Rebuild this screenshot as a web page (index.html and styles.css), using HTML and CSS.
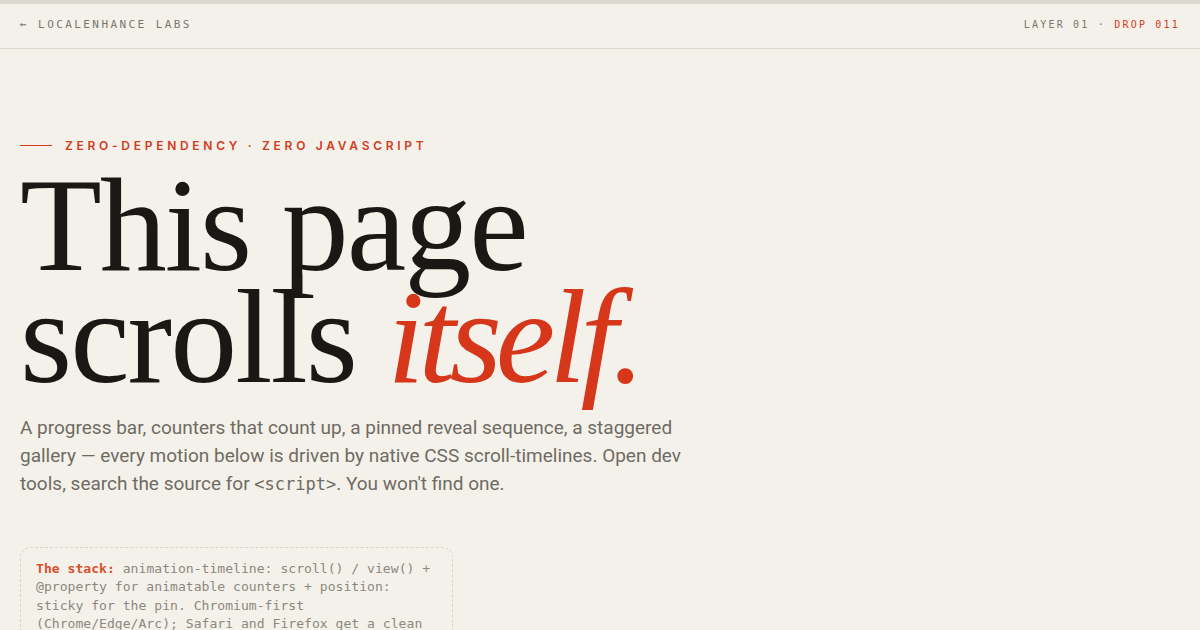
FILE: index.html
```html
<!DOCTYPE html>
<html lang="en">
<head>
<meta charset="utf-8">
<title>This page scrolls itself.</title>
<link rel="stylesheet" href="styles.css">
</head>
<body>
<div class="progress"></div>
<header class="topbar">
  <a class="back" href="#">← LocalEnhance Labs</a>
  <div class="meta">Layer 01 · <span class="drop">Drop 011</span></div>
</header>
<main class="hero">
  <div class="eyebrow"><span class="rule"></span><span>Zero-dependency · Zero JavaScript</span></div>
  <h1 class="title">This page<br>scrolls <em>itself.</em></h1>
  <p class="lede">A progress bar, counters that count up, a pinned reveal sequence, a staggered gallery — every motion below is driven by native CSS scroll-timelines. Open dev tools, search the source for <code>&lt;script&gt;</code>. You won't find one.</p>
  <div class="stack"><strong>The stack:</strong> animation-timeline: scroll() / view() + @property for animatable counters + position: sticky for the pin. Chromium-first (Chrome/Edge/Arc); Safari and Firefox get a clean static fallback.</div>
</main>
</body>
</html>
```

FILE: styles.css
```css
html, body {
  margin: 0;
  padding: 0;
  background: #f4f1ea;
  overflow: hidden;
}
body {
  position: relative;
  font-family: "Roboto", "Inter", "Liberation Sans", sans-serif;
  color: #1a1814;
  height: 630px;
}
.progress {
  position: absolute;
  top: 0;
  left: 0;
  right: 0;
  height: 4px;
  background: #dbd9d0;
}
.topbar {
  height: 48px;
  padding: 0 20px;
  display: flex;
  align-items: center;
  justify-content: space-between;
  border-bottom: 1px solid #ddd9d1;
  font-family: "DejaVu Sans Mono", monospace;
  text-transform: uppercase;
  color: #7a766e;
}
.back {
  color: inherit;
  text-decoration: none;
  font-size: 11px;
  letter-spacing: 0.22em;
}
.meta {
  font-size: 10px;
  letter-spacing: 0.22em;
}
.drop {
  color: #d23b1c;
}
.hero {
  padding: 88px 20px 0;
}
.eyebrow {
  display: flex;
  align-items: center;
  gap: 13px;
  height: 16px;
  font-family: "Inter", "Liberation Sans", sans-serif;
  font-size: 12px;
  font-weight: 600;
  letter-spacing: 0.31em;
  text-transform: uppercase;
  color: #d23b1c;
}
.rule {
  width: 32px;
  height: 1px;
  background: #d23b1c;
}
.title {
  margin: 16px 0 0;
  font-family: "Liberation Serif", serif;
  font-weight: 400;
  font-size: 134px;
  line-height: 112px;
  letter-spacing: -0.015em;
  color: #1a1814;
}
.title em {
  color: #d6361a;
  letter-spacing: -0.045em;
}
.lede {
  margin: 21px 0 0;
  max-width: 680px;
  font-size: 19px;
  line-height: 28px;
  color: #6f6b63;
}
.lede code {
  font-family: "DejaVu Sans Mono", monospace;
  font-size: 17px;
}
.stack {
  margin-top: 49px;
  width: 401px;
  padding: 12px 15px;
  border: 1px dashed #d8d4cc;
  border-radius: 10px;
  font-family: "DejaVu Sans Mono", monospace;
  font-size: 13.1px;
  line-height: 18.3px;
  color: #8c887f;
}
.stack strong {
  color: #d8502e;
  font-weight: 700;
}
```
